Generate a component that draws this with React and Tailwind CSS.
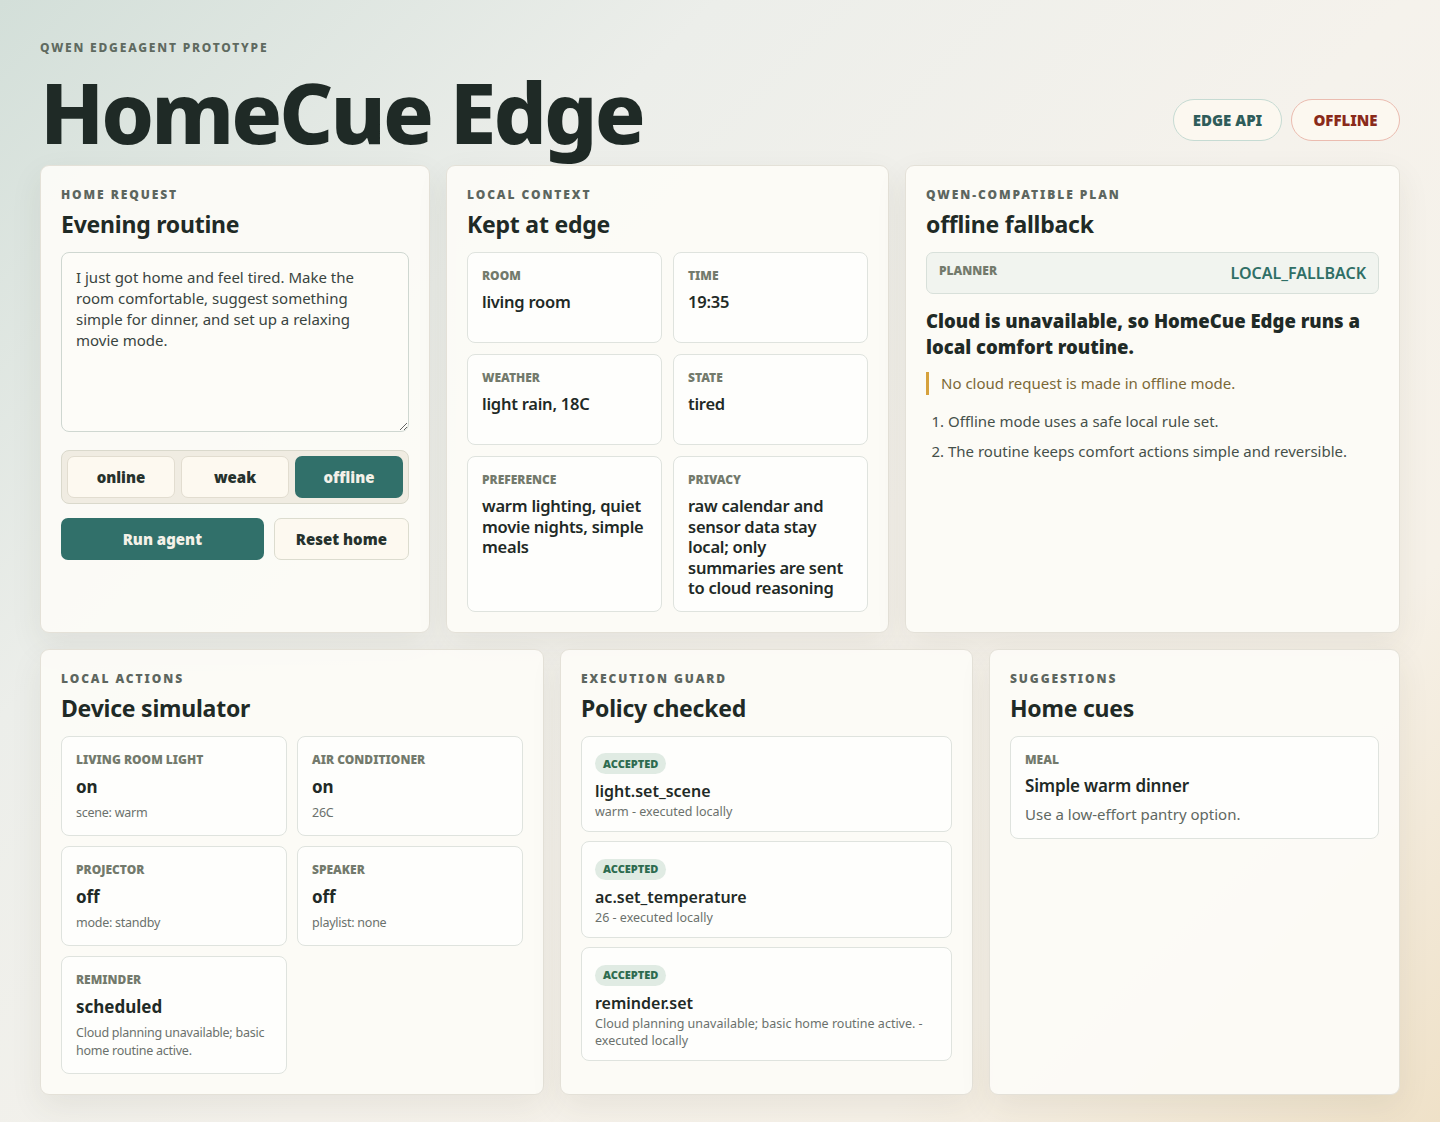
const contextTiles = [
  { label: 'Room', value: 'living room' },
  { label: 'Time', value: '19:35' },
  { label: 'Weather', value: 'light rain, 18C' },
  { label: 'State', value: 'tired' },
  { label: 'Preference', value: 'warm lighting, quiet movie nights, simple meals' },
  { label: 'Privacy', value: 'raw calendar and sensor data stay local; only summaries are sent to cloud reasoning' },
];

const devices = [
  { label: 'Living room light', value: 'on', detail: 'scene: warm' },
  { label: 'Air conditioner', value: 'on', detail: '26C' },
  { label: 'Projector', value: 'off', detail: 'mode: standby' },
  { label: 'Speaker', value: 'off', detail: 'playlist: none' },
  { label: 'Reminder', value: 'scheduled', detail: 'Cloud planning unavailable; basic home routine active.' },
];

const actions = [
  { name: 'light.set_scene', detail: 'warm - executed locally' },
  { name: 'ac.set_temperature', detail: '26 - executed locally' },
  { name: 'reminder.set', detail: 'Cloud planning unavailable; basic home routine active. - executed locally' },
];

const Card = ({ eyebrow, title, children }) => (
  <section className="rounded-[9px] border border-[#e4e1d8] bg-[#fcfbf7]/95 px-5 pt-[21px] pb-5 shadow-[0_12px_32px_rgba(70,60,40,0.08)]">
    <div className="text-[12px] font-black uppercase leading-4 tracking-[0.16em] text-[#5d665f]">{eyebrow}</div>
    <h2 className="mt-[6px] mb-[13px] text-[23px] font-bold leading-[30px] tracking-[-0.01em] text-[#1f2a26]">{title}</h2>
    {children}
  </section>
);

const TileLabel = ({ children }) => (
  <div className="text-[12px] font-black uppercase leading-4 text-[#737a6c]">{children}</div>
);

export default function App() {
  return (
    <div className="min-h-screen bg-[linear-gradient(135deg,#d3dfd9_0%,#eceeea_28%,#f5f2ec_55%,#f6f1e8_78%,#efe1c8_100%)] px-10 pt-[40px] pb-7 font-['Noto_Sans',sans-serif] text-[#1f2a26]">
      <header className="flex items-end justify-between pb-[13px]">
        <div>
          <div className="text-[12px] font-extrabold uppercase leading-4 tracking-[0.15em] text-[#5f6a60]">
            Qwen EdgeAgent prototype
          </div>
          <h1 className="mt-[16px] text-[84px] font-extrabold leading-[80px] tracking-[-0.035em] text-[#1f2a26]">
            HomeCue Edge
          </h1>
        </div>
        <div className="mb-[11px] flex gap-[9px]">
          <span className="flex h-[42px] w-[109px] items-center justify-center rounded-full border border-[#c6dbd3] bg-[#fcf8f0] text-[15px] font-black text-[#2e5c5a]">
            EDGE API
          </span>
          <span className="flex h-[42px] w-[109px] items-center justify-center rounded-full border border-[#ebbcb0] bg-[#fcf8f0] text-[15px] font-black text-[#8a2a1a]">
            OFFLINE
          </span>
        </div>
      </header>

      <div className="grid grid-cols-[390px_443px_1fr] gap-4">
        <Card eyebrow="Home request" title="Evening routine">
          <textarea
            className="block h-[180px] w-full resize-y rounded-[8px] border border-[#cfd7d1] bg-[#fdfcf8] px-[14px] py-[14px] text-[15px] leading-[21px] text-[#39443f] outline-none"
            defaultValue="I just got home and feel tired. Make the room comfortable, suggest something simple for dinner, and set up a relaxing movie mode."
          />
          <div className="mt-[18px] grid grid-cols-3 gap-[6px] rounded-[8px] border border-[#dad9cc] bg-[#f0ece2] p-[5px]">
            <button className="h-[42px] rounded-[7px] border border-[#e2ddd0] bg-[#fdf9f0] text-[15px] font-black text-[#26322d]">online</button>
            <button className="h-[42px] rounded-[7px] border border-[#e2ddd0] bg-[#fdf9f0] text-[15px] font-black text-[#26322d]">weak</button>
            <button className="h-[42px] rounded-[7px] bg-[#31706a] text-[15px] font-black text-[#f4f1e8]">offline</button>
          </div>
          <div className="mt-[14px] grid grid-cols-[1.5fr_1fr] gap-[10px]">
            <button className="h-[42px] rounded-[7px] bg-[#31706a] text-[15px] font-black text-[#f4f1e8]">Run agent</button>
            <button className="h-[42px] rounded-[7px] border border-[#dcdccf] bg-[#fdf9f0] text-[15px] font-black text-[#26322d]">Reset home</button>
          </div>
        </Card>

        <Card eyebrow="Local context" title="Kept at edge">
          <div className="grid grid-cols-2 gap-[11px]">
            {contextTiles.map((tile) => (
              <div key={tile.label} className="min-h-[91px] rounded-[8px] border border-[#dfe3de] bg-[#fefefc] px-[14px] pt-[15px] pb-[12px]">
                <TileLabel>{tile.label}</TileLabel>
                <div className="mt-[8px] text-[16.5px] font-semibold leading-[20.5px] tracking-[-0.015em] text-[#1f2a26]">{tile.value}</div>
              </div>
            ))}
          </div>
        </Card>

        <Card eyebrow="Qwen-compatible plan" title="offline fallback">
          <div className="flex h-[42px] items-center justify-between rounded-[7px] border border-[#d8e0da] bg-[#f1f4ef] px-3">
            <span className="-mt-[4px] text-[12px] font-black uppercase text-[#737a6c]">Planner</span>
            <span className="text-[16px] font-semibold text-[#2f6f66]">LOCAL_FALLBACK</span>
          </div>
          <p className="mt-[14px] text-[18.5px] font-black leading-[26px] text-[#1f2a26]">
            Cloud is unavailable, so HomeCue Edge runs a local comfort routine.
          </p>
          <div className="mt-[12px] border-l-[3px] border-[#d6a13c] pl-3 text-[15px] leading-[23px] text-[#7b6836]">
            No cloud request is made in offline mode.
          </div>
          <ol className="mt-[16px] list-decimal space-y-[9px] pl-[22px] text-[15px] leading-[21px] text-[#45504a]">
            <li>Offline mode uses a safe local rule set.</li>
            <li>The routine keeps comfort actions simple and reversible.</li>
          </ol>
        </Card>
      </div>

      <div className="mt-4 grid grid-cols-[504px_413px_1fr] gap-4">
        <Card eyebrow="Local actions" title="Device simulator">
          <div className="grid grid-cols-2 gap-[10px]">
            {devices.map((d) => (
              <div key={d.label} className="rounded-[8px] border border-[#dfe3de] bg-[#fefefc] px-[14px] pt-[15px] pb-[13px]">
                <TileLabel>{d.label}</TileLabel>
                <div className="mt-[8px] text-[17px] font-bold leading-[22px] text-[#1f2a26]">{d.value}</div>
                <div className="mt-[6px] text-[12.5px] leading-[18px] tracking-[-0.02em] text-[#6b716c]">{d.detail}</div>
              </div>
            ))}
          </div>
        </Card>

        <Card eyebrow="Execution guard" title="Policy checked">
          <div className="flex flex-col gap-[9px]">
            {actions.map((a) => (
              <div key={a.name} className="rounded-[8px] border border-[#dfe3de] bg-[#fefefc] px-[13px] pt-[13px] pb-[11px]">
                <span className="inline-flex h-[21px] items-center rounded-full bg-[#e0ebe3] px-2 text-[11px] font-black uppercase text-[#2e6b4f]">Accepted</span>
                <div className="mt-[6px] text-[16px] font-semibold leading-[22px] text-[#1f2a26]">{a.name}</div>
                <div className="mt-[1px] text-[12.5px] leading-[17px] text-[#6b716c]">{a.detail}</div>
              </div>
            ))}
          </div>
        </Card>

        <Card eyebrow="Suggestions" title="Home cues">
          <div className="rounded-[8px] border border-[#dfe3de] bg-[#fefefc] px-[14px] pt-[15px] pb-[14px]">
            <TileLabel>Meal</TileLabel>
            <div className="mt-[7px] text-[17px] font-semibold leading-[22px] tracking-[-0.01em] text-[#1f2a26]">Simple warm dinner</div>
            <div className="mt-[7px] text-[15px] leading-[20px] text-[#5f6862]">Use a low-effort pantry option.</div>
          </div>
        </Card>
      </div>
    </div>
  );
}
